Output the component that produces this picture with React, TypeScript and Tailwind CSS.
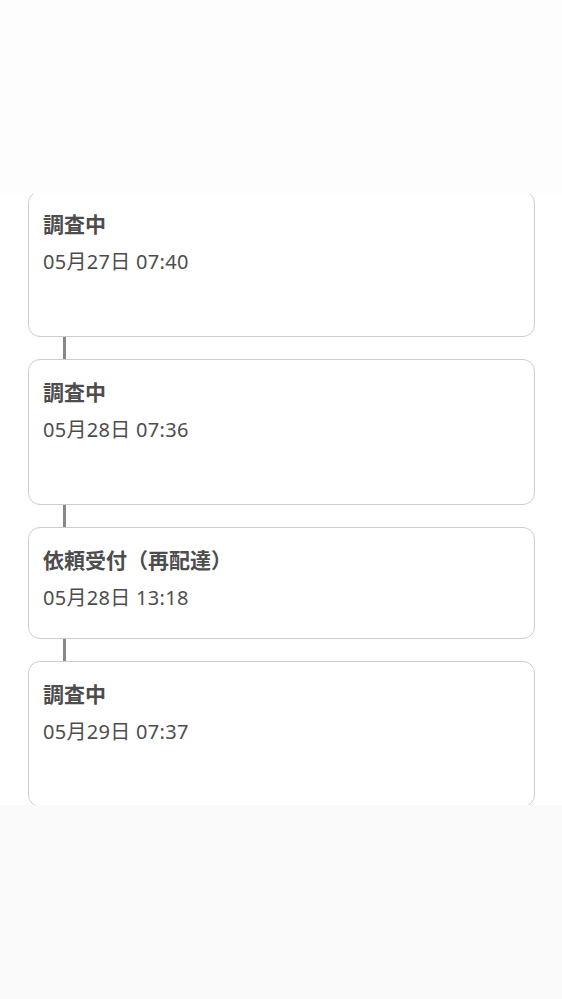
const events = [
  { title: '調査中', time: '05月27日 07:40', note: true },
  { title: '調査中', time: '05月28日 07:36', note: true },
  { title: '依頼受付（再配達）', time: '05月28日 13:18', note: false },
  { title: '調査中', time: '05月29日 07:37', note: true },
];

export default function App() {
  return (
    <div
      className="flex h-[999px] w-full flex-col bg-[#fafafa] text-[#4d4d4d]"
      style={{ fontFamily: '"Noto Sans", "Noto Sans CJK JP", sans-serif' }}
    >
      <div className="h-[194px] shrink-0 bg-[#fdfdfd]" />

      {/* tracking history */}
      <div className="h-[611px] shrink-0 overflow-hidden bg-white">
        <div className="-mt-[3px] flex flex-col">
          {events.map((ev, i) => (
            <div key={i} className="flex flex-col">
              {i > 0 && <div className="ml-[63px] h-[22px] w-[3px] bg-[#888]" />}
              <div className="mr-[27px] ml-[28px] rounded-[12px] border border-[#cdcdcd] bg-white px-[14px] pt-[18px] pb-[26px]">
                <p className="text-[21px] font-semibold leading-[28px]">{ev.title}</p>
                <p className="mt-[10px] text-[20px] font-normal leading-[28px] tracking-[0.3px]">{ev.time}</p>
                {ev.note && <div className="h-[34px]" />}
              </div>
            </div>
          ))}
        </div>
      </div>

      <div className="flex-1 bg-[#fafafa]" />
    </div>
  );
}
